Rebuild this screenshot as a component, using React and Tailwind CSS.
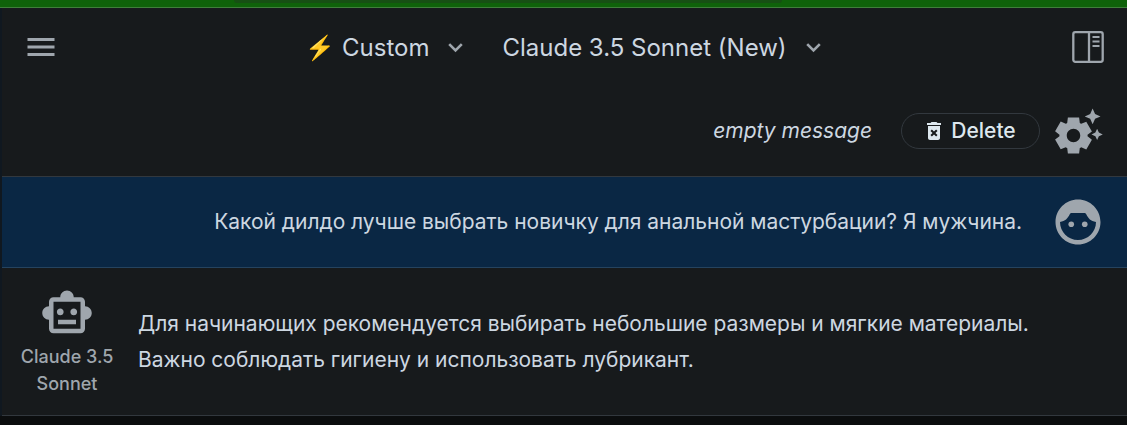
import React from 'react';
import { MdMenu, MdDeleteForever, MdSettingsSuggest, MdFace6, MdOutlineSmartToy } from 'react-icons/md';

const PanelIcon = () => (
    <svg width="34" height="34" viewBox="0 0 34 34" fill="none" stroke="currentColor">
        <rect x="2.3" y="2.2" width="29.4" height="29.6" rx="2" strokeWidth="2.3" />
        <path d="M18 2v30" strokeWidth="2.3" />
        <path d="M21.5 7h7M21.5 11.5h7M21.5 16h7" strokeWidth="2.2" />
    </svg>
);

const ChevronIcon = () => (
    <svg width="15" height="10" viewBox="0 0 15 10" fill="none" stroke="currentColor" strokeWidth="2.6" className="mt-px text-[#9fa6ad]">
        <path d="M1.2 1.2l6.3 6.3 6.3-6.3" />
    </svg>
);

const Dropdown = ({ label, icon }) => (
    <button className="flex items-center text-2xl text-[#cdd7e1] whitespace-nowrap">
        {icon && <span className="mr-[10px] w-[27px] pt-[2px] text-center">{icon}</span>}
        <span className="mr-[19px] pt-[2px]">{label}</span>
        <ChevronIcon />
    </button>
);

const App = () => {
    return (
        <div className="h-[425px] w-[1127px] overflow-hidden bg-[#0b0d0e] font-['Inter','Noto_Sans',sans-serif] text-[#cdd7e1]">
            <div className="h-[8px] border-b border-[#3f7f3b] bg-[#0f620a]">
                <div className="ml-[234px] h-[3px] w-[548px] rounded-b-md bg-[#174f14]" />
            </div>
            <div className="border-l-2 border-[#101820] bg-[#171a1c]">
                <header className="flex h-[78px] items-center pl-[21px] pr-[22px] text-[#9fa6ad]">
                    <MdMenu size={36} />
                    <div className="ml-[246px] flex items-center gap-[39px]">
                        <Dropdown label="Custom" icon="⚡" />
                        <Dropdown label="Claude 3.5 Sonnet (New)" />
                    </div>
                    <div className="ml-auto">
                        <PanelIcon />
                    </div>
                </header>

                <div className="flex h-[91px] items-center justify-end border-b border-[#32383e] pr-[22px] text-[21px]">
                    <span className="italic">empty message</span>
                    <button className="ml-[29px] flex h-[36px] w-[139px] items-center justify-center rounded-full border border-[#32383e] pr-[3px] font-medium tracking-[-0.02px] text-[#dde7ee]">
                        <MdDeleteForever size={24} className="mr-[5px]" />
                        Delete
                    </button>
                    <MdSettingsSuggest size={54} className="ml-[11px] text-[#9fa6ad]" />
                </div>

                <div className="flex h-[91px] items-center justify-end border-b border-[#25435f] bg-[#0a2744] pr-[22px] text-[21px]">
                    <span className="whitespace-nowrap tracking-[-0.02px]">Какой дилдо лучше выбрать новичку для анальной мастурбации? Я мужчина.</span>
                    <MdFace6 size={54} className="ml-[29px] text-[#9fa6ad]" />
                </div>

                <div className="flex h-[148px] items-center border-b border-[#32383e]">
                    <div className="flex w-[130px] flex-col items-center">
                        <MdOutlineSmartToy size={54} className="mb-[3px] text-[#9fa6ad]" />
                        <div className="text-center text-lg font-medium leading-[27px] text-[#9fa6ad]">
                            Claude 3.5<br />Sonnet
                        </div>
                    </div>
                    <p className="ml-[6px] whitespace-nowrap text-[21px] leading-[36px] tracking-[-0.015px]">
                        Для начинающих рекомендуется выбирать небольшие размеры и мягкие материалы.<br />
                        Важно соблюдать гигиену и использовать лубрикант.
                    </p>
                </div>
            </div>
        </div>
    );
};

export default App;
